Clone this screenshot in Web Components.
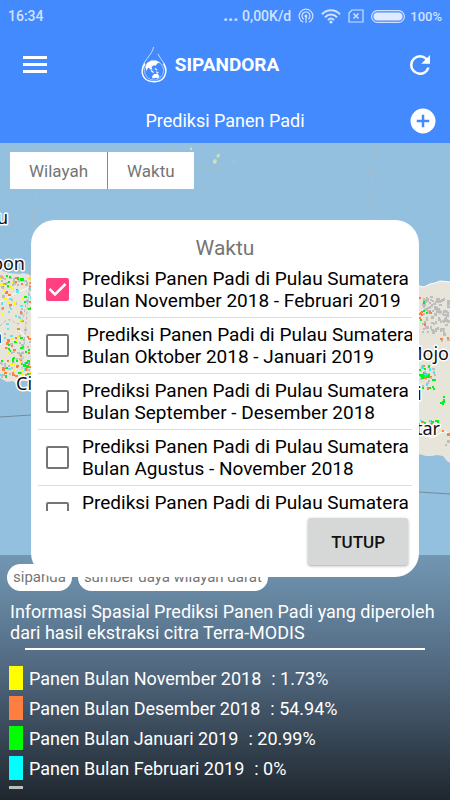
<!DOCTYPE html>
<html lang="id">
<head>
<meta charset="utf-8">
<meta name="viewport" content="width=device-width, initial-scale=1">
<title>SIPANDORA</title>
<style>
    html, body { margin: 0; }
    body {
        --brand: #448aff;
        --grey: #757575;
        font-family: Roboto, "Liberation Sans", sans-serif;
        font-size: 18px;
    }
</style>
</head>
<body>
<sipandora-app></sipandora-app>

<script>
// ── Base class ────────────────────────────────────────────────────────────────
class BaseElement extends HTMLElement {
    constructor() {
        super();
        this.attachShadow({ mode: 'open' });
    }

    connectedCallback() {
        this.shadowRoot.innerHTML = this.render();
        this.ready();
    }

    ready() {}
}

// ── Status bar ────────────────────────────────────────────────────────────────
class StatusBar extends BaseElement {
    render() {
        return `
            <style>
                :host {
                    display: flex;
                    align-items: center;
                    justify-content: space-between;
                    height: 32px;
                    padding: 0 8px;
                    color: #d0e2ff;
                    font-size: 14px;
                    font-weight: 500;
                }
                .right { display: flex; align-items: center; gap: 7px; }
                .speed { line-height: 16px; }
                .dots { font-size: 18px; font-weight: 700; line-height: 14px; }
                .battery { font-size: 13px; margin-left: -2px; }
                svg { display: block; }
            </style>
            <span>16:34</span>
            <div class="right">
                <span class="speed"><span class="dots">...</span> 0,00K/d</span>
                <svg width="16" height="16" viewBox="0 0 16 16" fill="none" stroke="currentColor" stroke-width="1.2">
                    <path d="M5.2 14.2A6.8 6.8 0 1 1 10.8 14.2"/>
                    <path d="M5.7 11.2A4 4 0 1 1 10.3 11.2"/>
                    <circle cx="8" cy="8" r="1.5" fill="currentColor" stroke="none"/>
                    <path d="M8 9v6"/>
                </svg>
                <svg width="20" height="15" viewBox="0 0 20 15" fill="none" stroke="currentColor" stroke-width="2">
                    <path d="M1 5.2C6-.2 14-.2 19 5.2M4 8.2c3.5-3.6 8.5-3.6 12 0M7 11c2-2 4-2 6 0"/>
                    <circle cx="10" cy="13" r="1.6" fill="currentColor" stroke="none"/>
                </svg>
                <svg width="16" height="14" viewBox="0 0 16 14" fill="none" stroke="currentColor" stroke-width="1.2">
                    <path d="M4 1h11v12H1V4z"/>
                    <path d="M5.5 4.5l5 5M10.5 4.5l-5 5" stroke-width="1.5"/>
                </svg>
                <svg width="34" height="13" viewBox="0 0 34 13">
                    <rect x=".6" y=".6" width="32.8" height="11.8" rx="5.9" fill="none" stroke="currentColor" stroke-width="1.2"/>
                    <rect x="2.5" y="2.5" width="29" height="8" rx="4" fill="#e0ebff"/>
                </svg>
                <span class="battery">100%</span>
            </div>
        `;
    }
}
customElements.define('status-bar', StatusBar);

// ── Header ────────────────────────────────────────────────────────────────────
class AppHeader extends BaseElement {
    render() {
        return `
            <style>
                :host { display: block; background: var(--brand); color: #fff; }
                .bar, .sub {
                    display: grid;
                    grid-template-columns: 30px 1fr 30px;
                    align-items: center;
                }
                .bar { height: 66px; padding: 0 15px 0 20px; }
                .sub { height: 45px; padding: 0 12px; }
                .brand {
                    display: flex;
                    align-items: center;
                    justify-content: center;
                    gap: 8px;
                    padding-right: 35px;
                }
                h1, h2 { margin: 0; line-height: 22px; }
                h1 { font-size: 19px; }
                h2 { grid-column: 2; font-size: 18px; font-weight: 400; text-align: center; }
                button {
                    display: block;
                    width: 30px;
                    height: 30px;
                    padding: 0;
                    border: 0;
                    background: none;
                    color: inherit;
                }
                svg { display: block; }
            </style>
            <status-bar></status-bar>
            <div class="bar">
                <button aria-label="Menu">
                    <svg width="30" height="30" viewBox="0 0 30 30" fill="currentColor">
                        <path d="M3 6h24v3H3zM3 13h24v3H3zM3 20h24v3H3z"/>
                    </svg>
                </button>
                <div class="brand">
                    <svg width="26" height="36" viewBox="0 0 26 36" fill="none" stroke="#fff">
                        <path d="M12.5 0C11.5 8 1 14 1 23.5" stroke-width=".7"/>
                        <path d="M17 7c3 6 8 10 8 16.5" stroke-width=".7"/>
                        <path d="M4 16.5C-1 24 1.5 30 5 32.5s12 3.5 16 0 5.5-10 1.5-16" stroke-width="1.4"/>
                        <circle cx="13" cy="23.5" r="9.6" stroke-width=".5"/>
                        <path d="M4.5 20l1.5-4 4-2.5 5 0 4 2-3 1-1 2-3 0-1.5 2 1 2-2 0-2-2-1.5 2-.5 2z" fill="#fff" stroke="none"/>
                        <path d="M10 23.5l2.5 2M14 21.5l2 1.5M15 25l2.5.5" stroke-width="1.2"/>
                        <path d="M11 29.5l2-2.5 2 0 1.5-1 1 2 1 1.5-1.5 2-2-.7-3.5.7z" fill="#fff" stroke="none"/>
                    </svg>
                    <h1>SIPANDORA</h1>
                </div>
                <button aria-label="Muat ulang">
                    <svg width="30" height="30" viewBox="0 0 24 24" fill="currentColor">
                        <path d="M17.65 6.35A7.958 7.958 0 0 0 12 4a8 8 0 1 0 7.73 10h-2.08A5.99 5.99 0 0 1 12 18a6 6 0 1 1 0-12c1.66 0 3.14.69 4.22 1.78L13 11h7V4z"/>
                    </svg>
                </button>
            </div>
            <div class="sub">
                <h2>Prediksi Panen Padi</h2>
                <button aria-label="Tambah">
                    <svg width="30" height="30" viewBox="0 0 24 24" fill="currentColor">
                        <path d="M12 2a10 10 0 1 0 0 20 10 10 0 0 0 0-20zm5 11h-4v4h-2v-4H7v-2h4V7h2v4h4z"/>
                    </svg>
                </button>
            </div>
        `;
    }
}
customElements.define('app-header', AppHeader);

// ── Map ───────────────────────────────────────────────────────────────────────
class HarvestMap extends BaseElement {
    render() {
        return `
            <style>
                :host { display: block; background: #94c0e0; overflow: hidden; }
                svg { display: block; width: 100%; height: 100%; }
                text {
                    font: 18px "Noto Sans", sans-serif;
                    fill: #111;
                    stroke: #fff;
                    stroke-width: 3px;
                    stroke-linejoin: round;
                    paint-order: stroke;
                }
            </style>
            <svg viewBox="0 143 450 657" preserveAspectRatio="xMidYMin slice">
                <g fill="#e7e4d9">
                    <path d="M0 270l9 3 11 1 3-1 5 1 6 4 10 6v98l-18-1-8 0-2 3-3-3-6 1-7-4z"/>
                    <path d="M400 288l19-2 5 1 6-3 5-1 5-2 10 1v181l-3-2-4-5-6-1-5 1-6 0-7-2-19 0z"/>
                </g>
                <path d="M419 286l5 1 6-3 5-1 5-2 10 1M419 436c8-2 12 4 17 0s9-6 14-2M20 331l14 16M0 302l14-8 18-8" fill="none" stroke="#fff" stroke-width="1"/>
                <g id="cells" shape-rendering="crispEdges"></g>
                <g fill="#d5dfb4">
                    <path d="M190 147l2 1 0 2-2 0zM213 160l3-1 1 3-2 2-2-1zM216 156l3-3 1 3-2 2zM233 161h1v1h-1z"/>
                </g>
                <g fill="none" stroke="#bcb8bd" stroke-dasharray="3 2">
                    <path d="M38 142l-4 90-14 160 4 23M375 142l-6 80M0 326q8-10 14-4t10-7l3-18"/>
                    <path d="M174 142v26h50v-26" stroke="#9cbfc4" stroke-dasharray="1 1"/>
                </g>
                <path d="M0 417l31-2M419 492l31 2" stroke="#748a9b"/>
                <text x="8" y="224" text-anchor="end">u</text>
                <text x="25" y="270" text-anchor="end">bon</text>
                <text x="2" y="343" text-anchor="end">n</text>
                <text x="16" y="390">Ci</text>
                <text x="449" y="360" text-anchor="end">Mojo</text>
                <text x="417" y="400">i</text>
                <text x="440" y="435" text-anchor="end">tar</text>
            </svg>
        `;
    }

    ready() {
        // clusters: x, y, width, height, cell count, palette
        const clusters = [
            [0, 275, 31, 12, 50, ['#bdbdbd', '#bdbdbd', '#00f31c', '#fffb00', '#ff7f42']],
            [0, 287, 31, 22, 38, ['#bdbdbd', '#fffb00', '#ff7f42', '#00f31c', '#64e6ee']],
            [0, 309, 28, 26, 14, ['#bdbdbd', '#ff7f42', '#fffb00', '#64e6ee']],
            [0, 335, 31, 42, 85, ['#bdbdbd', '#bdbdbd', '#fffb00', '#00f31c', '#64e6ee', '#ff7f42']],
            [12, 360, 17, 15, 20, ['#00f31c', '#fffb00', '#ff7f42']],
            [422, 296, 26, 36, 110, ['#bdbdbd']],
            [419, 294, 12, 34, 14, ['#bdbdbd', '#ff7f42', '#ff7f42', '#00f31c']],
            [440, 328, 8, 12, 7, ['#ff7f42', '#bdbdbd']],
            [419, 364, 16, 26, 34, ['#00f31c', '#00f31c', '#34eef5', '#bdbdbd', '#ff7f42']],
            [419, 374, 12, 3, 8, ['#00f31c']],
            [439, 395, 5, 10, 5, ['#00f31c']],
            [419, 420, 20, 4, 10, ['#00f31c', '#34eef5', '#ff7f42']],
            [440, 425, 8, 28, 4, ['#ff7f42', '#bdbdbd']],
        ];
        let seed = 4211;
        const random = () => (seed = (seed * 16807) % 2147483647) / 2147483647;
        let cells = '';
        clusters.forEach(([x, y, w, h, count, palette]) => {
            for (let i = 0; i < count; i++) {
                const cx = x + Math.floor(random() * w);
                const cy = y + Math.floor(random() * h);
                const cw = random() > 0.7 ? 3 : 2;
                const ch = random() > 0.8 ? 3 : 2;
                const fill = palette[Math.floor(random() * palette.length)];
                cells += `<rect x="${cx}" y="${cy}" width="${cw}" height="${ch}" fill="${fill}"/>`;
            }
        });
        this.shadowRoot.getElementById('cells').innerHTML = cells;
    }
}
customElements.define('harvest-map', HarvestMap);

// ── Filter buttons over the map ───────────────────────────────────────────────
class FilterBar extends BaseElement {
    render() {
        return `
            <style>
                :host { display: flex; align-self: flex-start; background: #fff; }
                button {
                    height: 37px;
                    padding: 0 19px;
                    border: 0;
                    background: none;
                    color: var(--grey);
                    font: 17px Roboto, sans-serif;
                }
                button + button { border-left: 1px solid #8a8a8a; }
            </style>
            <button>Wilayah</button><button>Waktu</button>
        `;
    }
}
customElements.define('filter-bar', FilterBar);

// ── Legend row ────────────────────────────────────────────────────────────────
class LegendRow extends BaseElement {
    render() {
        return `
            <style>
                :host { display: flex; align-items: center; height: 24px; }
                i { width: 14px; height: 24px; margin-right: 6px; background: ${this.getAttribute('color')}; }
                .value { margin-left: 10px; }
            </style>
            <i></i><span><slot></slot></span><span class="value"><slot name="value"></slot></span>
        `;
    }
}
customElements.define('legend-row', LegendRow);

// ── Info panel ────────────────────────────────────────────────────────────────
class InfoPanel extends BaseElement {
    render() {
        return `
            <style>
                :host {
                    display: block;
                    padding: 9px 7px 11px;
                    background: linear-gradient(#7297b3, #526a82 45%, #1f272e);
                    color: #fff;
                }
                .tags { display: flex; gap: 6px; }
                .tags span {
                    padding: 0 6px;
                    border-radius: 14px;
                    background: #fff;
                    color: var(--grey);
                    font-size: 15px;
                    line-height: 27px;
                }
                p { margin: 10px 3px 5px; line-height: 21px; }
                hr { margin: 0 18px 16px; border: 0; border-top: 2px solid #fff; }
                .legend {
                    display: flex;
                    flex-direction: column;
                    gap: 6px;
                    max-height: 123px;
                    padding-left: 2px;
                    overflow: hidden;
                }
                ::slotted(*) { flex: none; }
            </style>
            <div class="tags"><span>sipanda</span><span>sumber daya wilayah darat</span></div>
            <p>Informasi Spasial Prediksi Panen Padi yang diperoleh dari hasil ekstraksi citra Terra-MODIS</p>
            <hr>
            <div class="legend"><slot></slot></div>
        `;
    }
}
customElements.define('info-panel', InfoPanel);

// ── Period option ─────────────────────────────────────────────────────────────
class PeriodOption extends BaseElement {
    render() {
        return `
            <style>
                :host { display: block; border-bottom: 1px solid #ddd; }
                label {
                    display: grid;
                    grid-template-columns: 23px 1fr;
                    gap: 13px;
                    align-items: center;
                    height: 55px;
                    padding-left: 8px;
                    color: #000;
                    font-size: 19px;
                    line-height: 22px;
                }
                .box { display: grid; }
                .box > * { grid-area: 1 / 1; }
                .text { white-space: pre; }
                input {
                    appearance: none;
                    box-sizing: border-box;
                    width: 23px;
                    height: 23px;
                    margin: 0;
                    border: 2px solid #757575;
                    border-radius: 2px;
                }
                input:checked { border-color: #ff4081; background: #ff4081; }
                svg { display: none; pointer-events: none; }
                input:checked + svg { display: block; }
            </style>
            <label>
                <span class="box">
                    <input type="checkbox" ${this.hasAttribute('checked') ? 'checked' : ''}>
                    <svg width="23" height="23" viewBox="0 0 23 23" fill="none" stroke="#fff" stroke-width="2.5">
                        <path d="M3.5 11l5.5 5.5L19.5 6"/>
                    </svg>
                </span>
                <span class="text"><slot></slot></span>
            </label>
        `;
    }
}
customElements.define('period-option', PeriodOption);

// ── Dialog ────────────────────────────────────────────────────────────────────
class PeriodDialog extends BaseElement {
    render() {
        return `
            <style>
                :host {
                    display: block;
                    padding: 15px 7px 12px;
                    border-radius: 24px;
                    background: #fff;
                }
                h3 {
                    margin: 0;
                    color: var(--grey);
                    font-size: 21px;
                    font-weight: 400;
                    line-height: 27px;
                    text-align: center;
                }
                .list { max-height: 249px; overflow: hidden; }
                footer { display: flex; justify-content: flex-end; padding: 7px 4px 0 0; }
                button {
                    height: 47px;
                    padding: 0 23px;
                    border: 0;
                    border-radius: 3px;
                    background: #d6d8d7;
                    box-shadow: 0 1px 3px rgba(0, 0, 0, 0.35);
                    color: #111;
                    font: 500 17px Roboto, sans-serif;
                }
            </style>
            <h3>Waktu</h3>
            <div class="list"><slot></slot></div>
            <footer><button>TUTUP</button></footer>
        `;
    }

    ready() {
        this.shadowRoot.querySelector('button').addEventListener('click', () => this.remove());
    }
}
customElements.define('period-dialog', PeriodDialog);

// ── App ───────────────────────────────────────────────────────────────────────
class SipandoraApp extends BaseElement {
    render() {
        return `
            <style>
                :host {
                    position: relative;
                    display: flex;
                    flex-direction: column;
                    min-height: 100vh;
                }
                main { position: relative; display: flex; flex: 1; flex-direction: column; }
                harvest-map { position: absolute; inset: 0; }
                .content {
                    position: relative;
                    display: flex;
                    flex: 1;
                    flex-direction: column;
                    justify-content: space-between;
                }
                filter-bar { margin: 9px 10px; }
                .overlay {
                    position: absolute;
                    inset: 0;
                    display: grid;
                    grid-template-columns: minmax(0, 1fr);
                    align-items: center;
                    padding: 0 31px 3px;
                }
            </style>
            <app-header></app-header>
            <main>
                <harvest-map></harvest-map>
                <div class="content">
                    <filter-bar></filter-bar>
                    <info-panel>
                        <legend-row color="#ffff00">Panen Bulan November 2018<span slot="value">: 1.73%</span></legend-row>
                        <legend-row color="#ff7f42">Panen Bulan Desember 2018<span slot="value">: 54.94%</span></legend-row>
                        <legend-row color="#00ff00">Panen Bulan Januari 2019<span slot="value">: 20.99%</span></legend-row>
                        <legend-row color="#00ffff">Panen Bulan Februari 2019<span slot="value">: 0%</span></legend-row>
                        <legend-row color="#bdbdbd"></legend-row>
                    </info-panel>
                </div>
            </main>
            <div class="overlay">
                <period-dialog>
                    <period-option checked>Prediksi Panen Padi di Pulau Sumatera
Bulan November 2018 - Februari 2019</period-option>
                    <period-option>&nbsp;Prediksi Panen Padi di Pulau Sumatera
Bulan Oktober 2018 - Januari 2019</period-option>
                    <period-option>Prediksi Panen Padi di Pulau Sumatera
Bulan September - Desember 2018</period-option>
                    <period-option>Prediksi Panen Padi di Pulau Sumatera
Bulan Agustus - November 2018</period-option>
                    <period-option>Prediksi Panen Padi di Pulau Sumatera
Bulan Juli - Oktober 2018</period-option>
                </period-dialog>
            </div>
        `;
    }
}
customElements.define('sipandora-app', SipandoraApp);
</script>
</body>
</html>
